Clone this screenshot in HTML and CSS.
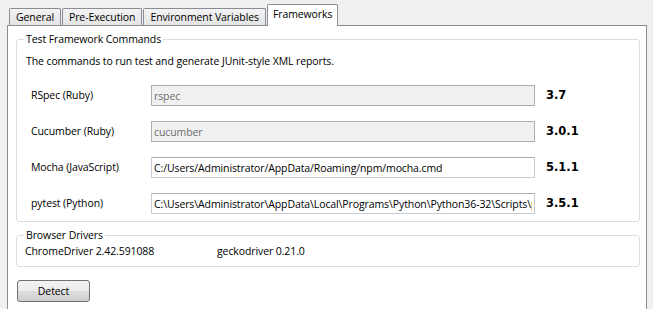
FILE: index.html
```html
<!DOCTYPE html>
<html lang="en">
<head>
    <meta charset="UTF-8">
    <title>Frameworks</title>
    <link rel="stylesheet" href="styles.css">
</head>
<body>
    <div class="window">
        <nav class="tabs">
            <button class="tab">General</button>
            <button class="tab">Pre-Execution</button>
            <button class="tab">Environment Variables</button>
            <button class="tab active">Frameworks</button>
        </nav>
        <div class="panel">
            <!-- Test framework commands -->
            <fieldset class="group">
                <legend>Test Framework Commands</legend>
                <p class="hint">The commands to run test and generate JUnit-style XML reports.</p>
                <div class="commands">
                    <label>RSpec (Ruby)</label>
                    <input type="text" value="rspec" disabled>
                    <span class="version">3.7</span>

                    <label>Cucumber (Ruby)</label>
                    <input type="text" value="cucumber" disabled>
                    <span class="version">3.0.1</span>

                    <label>Mocha (JavaScript)</label>
                    <input type="text" value="C:/Users/Administrator/AppData/Roaming/npm/mocha.cmd">
                    <span class="version">5.1.1</span>

                    <label>pytest (Python)</label>
                    <input type="text" value="C:\Users\Administrator\AppData\Local\Programs\Python\Python36-32\Scripts\pytest.exe">
                    <span class="version">3.5.1</span>
                </div>
            </fieldset>
            <!-- Browser drivers -->
            <fieldset class="group drivers">
                <legend>Browser Drivers</legend>
                <div class="driver-list">
                    <span class="driver">ChromeDriver 2.42.591088</span>
                    <span class="driver">geckodriver 0.21.0</span>
                </div>
            </fieldset>
            <button class="detect-btn">Detect</button>
        </div>
    </div>
</body>
</html>
```

FILE: styles.css
```css
body {
    margin: 0;
    background: #f0f0f0;
    font-family: "Open Sans", "Noto Sans", sans-serif;
    font-size: 10.5px;
    letter-spacing: -0.1px;
    line-height: 15px;
    color: #000;
}
.window {
    padding: 4px 6px 0 7px;
}
.tabs {
    display: flex;
    align-items: flex-end;
    height: 21px;
    padding-left: 2px;
}
.tab {
    font: inherit;
    letter-spacing: inherit;
    height: 17px;
    padding: 0 6px;
    margin-right: 1px;
    border: 1px solid #898c95;
    border-bottom: none;
    border-radius: 2px 2px 0 0;
    background: linear-gradient(#f3f3f3, #e4e4e4);
    color: #000;
}
.tab.active {
    height: 22px;
    margin: 0 -2px -1px 0;
    padding: 0 5px 3px;
    background: #fff;
    position: relative;
    z-index: 1;
}
.panel {
    background: #fff;
    border: 1px solid #898c95;
    padding: 0 6px 30px 8px;
}
.group {
    margin: 6px 0 0;
    padding: 0 7px 7px;
    border: 1px solid #d5dfe5;
    border-radius: 3px;
}
.group legend {
    padding: 0 2px;
}
.hint {
    margin: 7px 0 0 2px;
}
.commands {
    display: grid;
    grid-template-columns: 120px 384px auto;
    row-gap: 15px;
    align-items: center;
    margin-top: 16px;
    padding-left: 7px;
}
.commands input {
    font: inherit;
    letter-spacing: inherit;
    height: 21px;
    box-sizing: border-box;
    padding: 0 2px;
    border: 1px solid #c5ced8;
    border-top-color: #abadb3;
    color: #000;
    background: #fff;
}
.commands input:disabled {
    background: #f0f0f0;
    border-color: #adadad;
    color: #6d6d6d;
}
.version {
    margin-left: 11px;
    font-family: "DejaVu Sans", sans-serif;
    font-weight: bold;
    font-size: 11.5px;
    letter-spacing: 0;
}
.drivers {
    margin-top: 6px;
}
.driver-list {
    display: flex;
    margin-top: 1px;
    padding-left: 1px;
}
.driver {
    width: 192px;
}
.detect-btn {
    font: inherit;
    letter-spacing: inherit;
    display: block;
    width: 73px;
    height: 22px;
    margin: 13px 0 0 1px;
    border: 1px solid #707070;
    border-radius: 3px;
    background: linear-gradient(#f2f2f2 0%, #ebebeb 50%, #dddddd 51%, #cfcfcf 100%);
    color: #000;
}
```
